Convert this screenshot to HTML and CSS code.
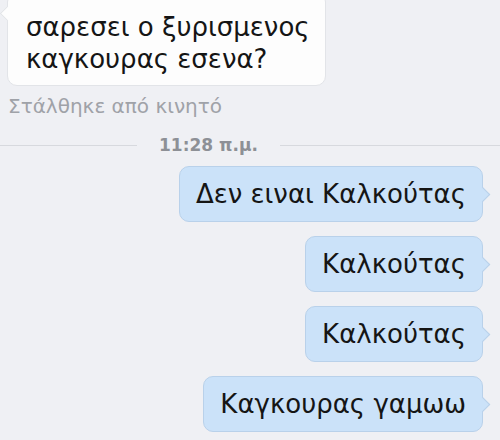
FILE: index.html
```html
<!DOCTYPE html>
<html lang="el">
<head>
    <meta charset="UTF-8">
    <meta name="viewport" content="width=device-width, initial-scale=1.0">
    <title>Μηνύματα</title>
    <link rel="stylesheet" href="styles.css">
</head>
<body>
    <div class="thread">
        <div class="bubble incoming">σαρεσει ο ξυρισμενος<br>καγκουρας εσενα?</div>
        <div class="sent-from">Στάλθηκε από κινητό</div>

        <div class="time-sep">
            <span class="line line-left"></span>
            <span class="time">11:28 π.μ.</span>
            <span class="line"></span>
        </div>

        <div class="bubble outgoing">Δεν ειναι Καλκούτας</div>
        <div class="bubble outgoing">Καλκούτας</div>
        <div class="bubble outgoing">Καλκούτας</div>
        <div class="bubble outgoing">Καγκουρας γαμωω</div>
    </div>
</body>
</html>
```

FILE: styles.css
```css
* {
    margin: 0;
    padding: 0;
    box-sizing: border-box;
}
body {
    background-color: #eff0f4;
    font-family: "DejaVu Sans", "Liberation Sans", sans-serif;
    overflow: hidden;
    height: 440px;
}
.thread {
    display: flex;
    flex-direction: column;
    align-items: flex-start;
}
.bubble {
    position: relative;
    font-size: 26px;
    line-height: 32px;
    color: #151515;
    border-radius: 10px;
}
.incoming {
    background-color: #fdfdfd;
    border: 1px solid #e2e4e8;
    margin: -8px 0 0 7px;
    padding: 18px 15px 10px 18px;
}
.incoming::before {
    content: "";
    position: absolute;
    left: -6px;
    top: 15px;
    width: 10px;
    height: 10px;
    background-color: #fdfdfd;
    border-left: 1px solid #e2e4e8;
    border-bottom: 1px solid #e2e4e8;
    transform: rotate(45deg);
}
.sent-from {
    margin: 8px 0 0 8px;
    font-size: 20px;
    line-height: 24px;
    color: #9fa2a8;
}
.time-sep {
    align-self: stretch;
    display: flex;
    align-items: center;
    gap: 22px;
    margin-top: 17px;
}
.line {
    flex: 1;
    height: 1px;
    background-color: #d7d9de;
}
.line-left {
    flex: 0 0 137px;
}
.time {
    font-size: 17px;
    font-weight: bold;
    line-height: 20px;
    color: #8d9096;
}
.outgoing {
    align-self: flex-end;
    margin: 11px 17px 0 0;
    padding: 11px 16px;
    background-color: #cbe2f9;
    border: 1px solid #b9d1ea;
}
.outgoing + .outgoing {
    margin-top: 14px;
}
.outgoing::after {
    content: "";
    position: absolute;
    right: -6px;
    top: 50%;
    width: 10px;
    height: 10px;
    margin-top: -5px;
    background-color: #cbe2f9;
    border-right: 1px solid #b9d1ea;
    border-top: 1px solid #b9d1ea;
    transform: rotate(45deg);
}
```
